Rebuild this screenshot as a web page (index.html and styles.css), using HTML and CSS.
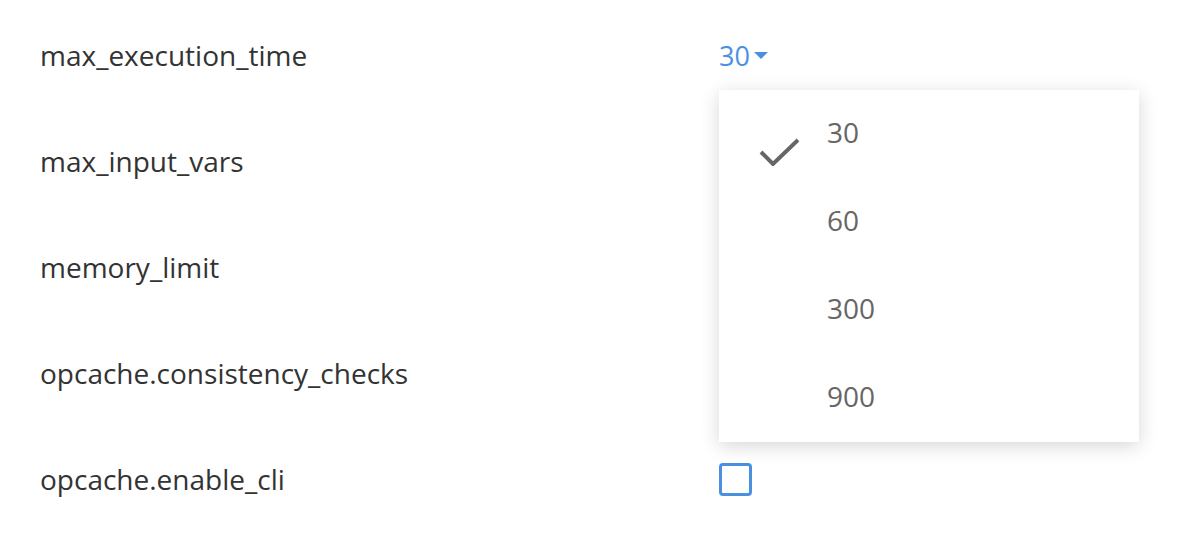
FILE: index.html
```html
<!DOCTYPE html>
<html lang="en">
<head>
    <meta charset="UTF-8">
    <title>PHP settings</title>
    <link rel="stylesheet" href="styles.css">
</head>
<body>
    <div class="settings">
        <div class="row">
            <div class="name">max_execution_time</div>
            <div class="value">
                <span class="select">30<span class="caret"></span></span>
                <ul class="menu">
                    <li class="item selected">
                        <svg class="check" viewBox="0 0 40 30" width="40" height="30">
                            <path d="M2 16 L14 28 L39 4" fill="none" stroke="#666" stroke-width="4"/>
                        </svg>
                        <span>30</span>
                    </li>
                    <li class="item"><span>60</span></li>
                    <li class="item"><span>300</span></li>
                    <li class="item"><span>900</span></li>
                </ul>
            </div>
        </div>
        <div class="row">
            <div class="name">max_input_vars</div>
            <div class="value"></div>
        </div>
        <div class="row">
            <div class="name">memory_limit</div>
            <div class="value"></div>
        </div>
        <div class="row">
            <div class="name">opcache.consistency_checks</div>
            <div class="value"></div>
        </div>
        <div class="row">
            <div class="name">opcache.enable_cli</div>
            <div class="value"><span class="checkbox"></span></div>
        </div>
    </div>
</body>
</html>
```

FILE: styles.css
```css
body {
    margin: 0;
    background: #fff;
    font-family: "Open Sans", Arial, sans-serif;
    color: #333;
}

.settings {
    padding: 2px 40px 0;
}

.row {
    display: flex;
    align-items: center;
    height: 106px;
}

.name {
    width: 679px;
    font-size: 28px;
}

.value {
    position: relative;
}

.select {
    display: inline-flex;
    align-items: center;
    color: #4a90e2;
    font-size: 27px;
}

.caret {
    width: 0;
    height: 0;
    margin-left: 4px;
    border-left: 7px solid transparent;
    border-right: 7px solid transparent;
    border-top: 7px solid #4a90e2;
}

.menu {
    position: absolute;
    top: 53px;
    left: 0;
    width: 420px;
    margin: 0;
    padding: 0;
    list-style: none;
    background: #fff;
    box-shadow: 0 4px 18px rgba(0, 0, 0, 0.16);
    z-index: 2;
}

.item {
    position: relative;
    height: 88px;
    padding-left: 108px;
    font-size: 28px;
    color: #666;
    line-height: 88px;
}

.item span {
    position: relative;
    top: -2px;
}

.check {
    position: absolute;
    left: 40px;
    top: 46px;
}

.checkbox {
    display: block;
    width: 27px;
    height: 27px;
    margin-top: 1px;
    border: 3px solid #4a90e2;
    border-radius: 4px;
}
```
